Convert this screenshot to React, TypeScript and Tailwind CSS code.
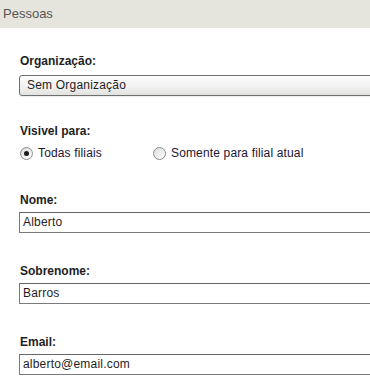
import type { ReactNode } from 'react';

const fields = [
  { label: "Nome:", value: "Alberto" },
  { label: "Sobrenome:", value: "Barros" },
  { label: "Email:", value: "alberto@email.com" },
];

function Label({ children }: { children: ReactNode }) {
  return <div className="text-[12px] leading-[14px] font-bold text-[#1e1e1e]">{children}</div>;
}

function Radio({ checked, label }: { checked?: boolean; label: string }) {
  return (
    <label className="flex items-center gap-[5px] text-[12px] leading-[14px] tracking-[0.15px] text-[#1c1633]">
      <span className="w-[13px] h-[13px] rounded-full border border-[#8c8c8c] bg-gradient-to-br from-[#dcdcdc] to-white flex items-center justify-center">
        {checked && <span className="w-[5px] h-[5px] rounded-full bg-[#1a1a1a]" />}
      </span>
      {label}
    </label>
  );
}

export default function App() {
  return (
    <div className="w-[370px] h-[389px] overflow-hidden bg-white" style={{ fontFamily: '"Liberation Sans", Arial, sans-serif' }}>
      <div className="h-[28px] bg-[#e6e5dd] pl-[3px] text-[13px] leading-[28px] text-[#555]">Pessoas</div>

      <div className="pl-[19px] pt-[26px] w-[420px]">
        <div className="pl-[1px]"><Label>Organização:</Label></div>
        <div className="mt-[7px] h-[21px] rounded-[3px] border border-[#6f6f6f] bg-gradient-to-b from-[#fcfcfc] via-[#f3f3f3] to-[#e2e2e0] pl-[7px] text-[12px] leading-[19px] tracking-[0.2px] text-[#1e1e1e] shadow-[0_1px_0_#ececec]">
          Sem Organização
        </div>

        <div className="mt-[28px] pl-[1px]"><Label>Visivel para:</Label></div>
        <div className="mt-[8px] pl-[1px] flex items-center">
          <div className="w-[133px]"><Radio checked label="Todas filiais" /></div>
          <Radio label="Somente para filial atual" />
        </div>

        {fields.map((f, i) => (
          <div key={i} className={i === 0 ? "mt-[33px]" : "mt-[31px]"}>
            <div className="pl-[1px]"><Label>{f.label}</Label></div>
            <div className="mt-[5px] h-[21px] border border-[#7a7a7a] border-t-[#666] pl-[3px] text-[12px] leading-[19px] tracking-[0.2px] text-[#1e1e1e]">
              {f.value}
            </div>
          </div>
        ))}
      </div>
    </div>
  );
}
